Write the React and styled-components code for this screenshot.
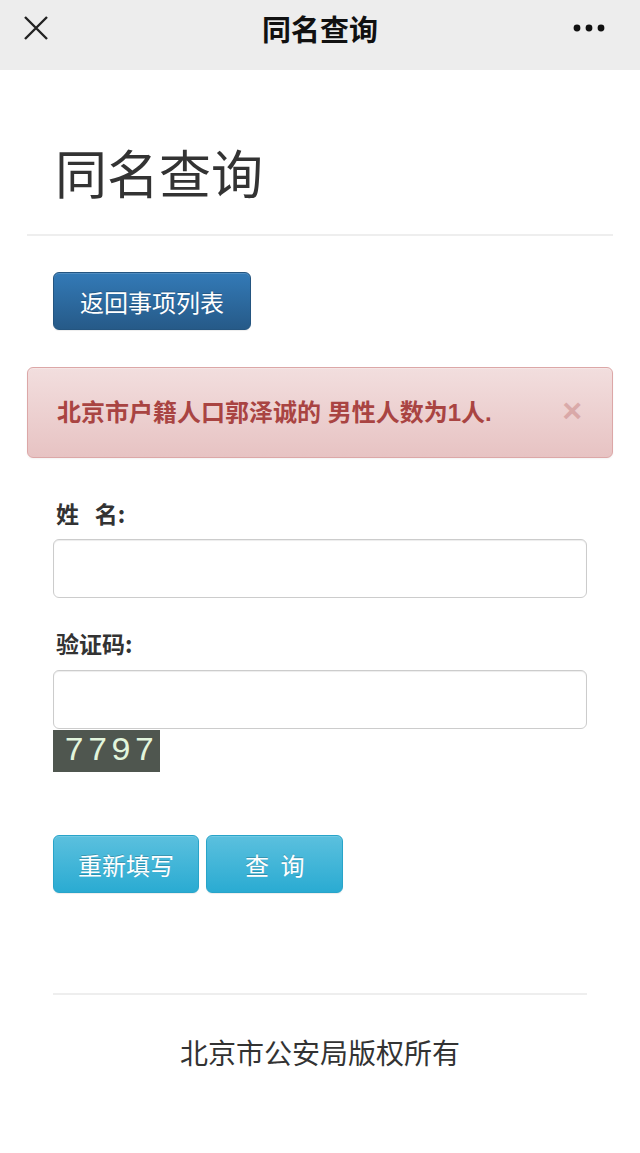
import React from "react";
import styled, { createGlobalStyle } from "styled-components";

const GlobalStyle = createGlobalStyle`
  body {
    margin: 0;
    background: #fff;
    font-family: "Liberation Sans", "Noto Sans CJK SC", sans-serif;
    color: #333;
  }
  * { box-sizing: border-box; }
`;

const TopBar = styled.header`
  height: 70px;
  padding-bottom: 14px;
  background: #ededed;
  display: grid;
  grid-template-columns: 80px 1fr 80px;
  align-items: center;
`;

const BarTitle = styled.h2`
  margin: 0;
  text-align: center;
  font-size: 29px;
  font-weight: 700;
  color: #111;
  font-family: "Noto Sans CJK SC", sans-serif;
`;

const IconSlot = styled.div`
  display: flex;
  align-items: center;
  justify-content: ${({ $end }) => ($end ? "flex-end" : "flex-start")};
  padding: ${({ $end }) => ($end ? "0 34px 0 0" : "0 0 0 22px")};
`;

const Page = styled.main`
  padding: 0 27px;
`;

const PageHeader = styled.div`
  margin-top: 71px;
  padding: 0 0 31px 28px;
  border-bottom: 2px solid #eeeeee;
`;

const Title = styled.h1`
  margin: 0;
  font-family: "Noto Sans CJK SC", sans-serif;
  font-size: 52px;
  line-height: 62px;
  font-weight: 400;
  color: #333;
`;

const Section = styled.div`
  padding: 0 26px;
`;

const Button = styled.button`
  font-family: "Noto Sans CJK SC", sans-serif;
  font-size: 24px;
  color: #fff;
  height: 58px;
  padding: ${({ $pad }) => $pad || "0 24px"};
  border-radius: 6px;
  cursor: pointer;
  text-shadow: 0 -1px 0 rgba(0, 0, 0, 0.2);
  box-shadow: inset 0 1px 0 rgba(255, 255, 255, 0.15), 0 1px 1px rgba(0, 0, 0, 0.075);
  background: ${({ $variant }) =>
    $variant === "primary"
      ? "linear-gradient(to bottom, #337ab7 0%, #265a88 100%)"
      : "linear-gradient(to bottom, #5bc0de 0%, #2aabd2 100%)"};
  border: 1px solid ${({ $variant }) => ($variant === "primary" ? "#245580" : "#28a4c9")};
  word-spacing: 6px;
`;

const BackRow = styled(Section)`
  margin-top: 36px;
`;

const Alert = styled.div`
  margin-top: 37px;
  height: 91px;
  display: flex;
  align-items: center;
  justify-content: space-between;
  padding: 0 30px 4px 29px;
  background: linear-gradient(to bottom, #f2dede 0%, #e7c3c3 100%);
  border: 1px solid #dca7a7;
  border-radius: 6px;
  box-shadow: inset 0 1px 0 rgba(255, 255, 255, 0.25), 0 1px 2px rgba(0, 0, 0, 0.05);
  color: #a94442;
  font-size: 24px;
  font-weight: 700;
  font-family: "Liberation Sans", "Noto Sans CJK SC", sans-serif;
`;

const Close = styled.span`
  font-size: 34px;
  font-weight: 700;
  color: #a94442;
  opacity: 0.28;
  line-height: 1;
  margin-bottom: 2px;
`;

const Form = styled(Section)`
  margin-top: 40px;
`;

const Label = styled.label`
  display: block;
  padding-left: 3px;
  font-family: "Noto Sans CJK SC", sans-serif;
  font-size: 23px;
  line-height: 30px;
  font-weight: 700;
  color: #333;
  white-space: pre;
  margin-top: ${({ $first }) => ($first ? "0" : "30px")};
`;

const Input = styled.input`
  display: block;
  width: 100%;
  height: 59px;
  margin-top: ${({ $gap }) => $gap || "11px"};
  border: 1px solid #cccccc;
  border-radius: 6px;
  box-shadow: inset 0 1px 1px rgba(0, 0, 0, 0.075);
  font-size: 22px;
  padding: 0 12px;
  background: #fff;
`;

const Captcha = styled.div`
  margin-top: 1px;
  width: 107px;
  height: 42px;
  background: #4f564f;
  color: #e2f5dc;
  font-family: "Liberation Mono", monospace;
  font-size: 34px;
  line-height: 42px;
  letter-spacing: 3px;
  padding-left: 11px;
`;

const Actions = styled.div`
  margin-top: 63px;
  display: flex;
  gap: 7px;
`;

const Footer = styled.footer`
  margin: 100px 53px 0;
  border-top: 2px solid #eeeeee;
  padding: 37px 0 80px;
  text-align: center;
  font-family: "Noto Sans CJK SC", sans-serif;
  font-size: 28px;
  line-height: 40px;
  color: #333;
`;

const CloseIcon = () => (
  <svg width="28" height="28" viewBox="0 0 28 28">
    <path d="M3 3 L25 25 M25 3 L3 25" stroke="#222" strokeWidth="2.4" fill="none" />
  </svg>
);

const MoreIcon = () => (
  <svg width="34" height="10" viewBox="0 0 34 10">
    <circle cx="5" cy="5" r="3.4" fill="#111" />
    <circle cx="17" cy="5" r="3.4" fill="#111" />
    <circle cx="29" cy="5" r="3.4" fill="#111" />
  </svg>
);

export default function App() {
  return (
    <>
      <GlobalStyle />
      <TopBar>
        <IconSlot>
          <CloseIcon />
        </IconSlot>
        <BarTitle>同名查询</BarTitle>
        <IconSlot $end>
          <MoreIcon />
        </IconSlot>
      </TopBar>
      <Page>
        <PageHeader>
          <Title>同名查询</Title>
        </PageHeader>
        <BackRow>
          <Button $variant="primary" $pad="0 26px">返回事项列表</Button>
        </BackRow>
        <Alert>
          <span>北京市户籍人口郭泽诚的 男性人数为1人.</span>
          <Close>×</Close>
        </Alert>
        <Form>
          <Label $first>{"姓   名:"}</Label>
          <Input type="text" />
          <Label>验证码:</Label>
          <Input type="text" $gap="12px" />
          <Captcha>7797</Captcha>
          <Actions>
            <Button>重新填写</Button>
            <Button $pad="0 38px">查 询</Button>
          </Actions>
        </Form>
      </Page>
      <Footer>北京市公安局版权所有</Footer>
    </>
  );
}
